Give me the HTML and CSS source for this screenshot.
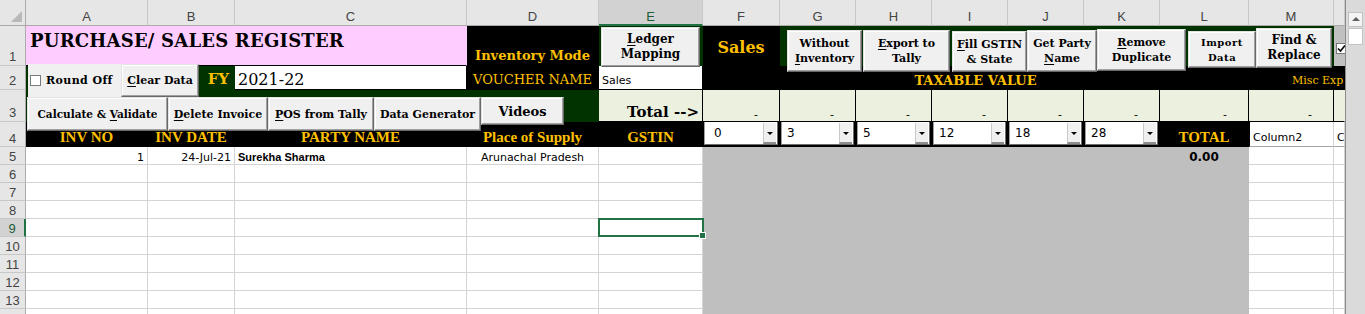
FILE: index.html
```html
<!DOCTYPE html>
<html lang="en">
<head>
    <meta charset="UTF-8">
    <title>Purchase / Sales Register</title>
    <link rel="stylesheet" href="styles.css">
</head>
<body>

<div class="app">
    <div class="wrap">
        <div class="sheet">
            <!-- column headers -->
            <div class="corner"><span class="tri"></span></div>
            <div class="ch">A</div>
            <div class="ch">B</div>
            <div class="ch">C</div>
            <div class="ch">D</div>
            <div class="ch on">E</div>
            <div class="ch">F</div>
            <div class="ch">G</div>
            <div class="ch">H</div>
            <div class="ch">I</div>
            <div class="ch">J</div>
            <div class="ch">K</div>
            <div class="ch">L</div>
            <div class="ch">M</div>
            <div class="ch"></div>

            <!-- row 1 -->
            <div class="rh tall">1</div>
            <div class="c pink title span3">PURCHASE/ SALES REGISTER</div>
            <div class="c blk mode">Inventory Mode</div>
            <div class="c dkg"></div>
            <div class="c blk sales">Sales</div>
            <div class="c dkg span7"></div>
            <div class="c grey"></div>

            <!-- row 2 -->
            <div class="rh tall">2</div>
            <div class="c dkg"></div>
            <div class="c dkg fy">FY</div>
            <div class="c boxed fyval">2021-22</div>
            <div class="c blk voucher">VOUCHER NAME</div>
            <div class="c boxed txt low">Sales</div>
            <div class="c blk span7 taxable">TAXABLE VALUE</div>
            <div class="c blk span2 misc">Misc Exp</div>

            <!-- row 3 -->
            <div class="rh tall">3</div>
            <div class="c dkg span4"></div>
            <div class="c lg total">Total --&gt;</div>
            <div class="c lg dash">-</div>
            <div class="c lg dash">-</div>
            <div class="c lg dash">-</div>
            <div class="c lg dash">-</div>
            <div class="c lg dash">-</div>
            <div class="c lg dash">-</div>
            <div class="c lg dash">-</div>
            <div class="c lg dash">-</div>
            <div class="c lg nb"></div>

            <!-- row 4 -->
            <div class="rh tall r4">4</div>
            <div class="c blk hdr">INV NO</div>
            <div class="c blk hdr">INV DATE</div>
            <div class="c blk hdr">PARTY NAME</div>
            <div class="c blk hdr">Place of Supply</div>
            <div class="c blk hdr">GSTIN</div>
            <div class="c blk"><div class="combo focus"><span>0</span><i class="drop"></i></div></div>
            <div class="c blk"><div class="combo"><span>3</span><i class="drop"></i></div></div>
            <div class="c blk"><div class="combo"><span>5</span><i class="drop"></i></div></div>
            <div class="c blk"><div class="combo"><span>12</span><i class="drop"></i></div></div>
            <div class="c blk"><div class="combo"><span>18</span><i class="drop"></i></div></div>
            <div class="c blk"><div class="combo"><span>28</span><i class="drop"></i></div></div>
            <div class="c blk hdr">TOTAL</div>
            <div class="c txt col first">Column2</div>
            <div class="c txt col">C</div>

            <!-- row 5 -->
            <div class="rh">5</div>
            <div class="c txt num">1</div>
            <div class="c txt num">24-Jul-21</div>
            <div class="c txt bold">Surekha Sharma</div>
            <div class="c txt mid">Arunachal Pradesh</div>
            <div class="c"></div>
            <div class="c gray span6"></div>
            <div class="c gray txt amount">0.00</div>
            <div class="c"></div>
            <div class="c"></div>

            <!-- rows 6 - 14 -->
            <div class="rh">6</div>
            <div class="c"></div><div class="c"></div><div class="c"></div><div class="c"></div><div class="c"></div>
            <div class="c gray span7"></div><div class="c"></div><div class="c"></div>

            <div class="rh">7</div>
            <div class="c"></div><div class="c"></div><div class="c"></div><div class="c"></div><div class="c"></div>
            <div class="c gray span7"></div><div class="c"></div><div class="c"></div>

            <div class="rh">8</div>
            <div class="c"></div><div class="c"></div><div class="c"></div><div class="c"></div><div class="c"></div>
            <div class="c gray span7"></div><div class="c"></div><div class="c"></div>

            <div class="rh on">9</div>
            <div class="c"></div><div class="c"></div><div class="c"></div><div class="c"></div><div class="c sel"></div>
            <div class="c gray span7"></div><div class="c"></div><div class="c"></div>

            <div class="rh">10</div>
            <div class="c"></div><div class="c"></div><div class="c"></div><div class="c"></div><div class="c"></div>
            <div class="c gray span7"></div><div class="c"></div><div class="c"></div>

            <div class="rh">11</div>
            <div class="c"></div><div class="c"></div><div class="c"></div><div class="c"></div><div class="c"></div>
            <div class="c gray span7"></div><div class="c"></div><div class="c"></div>

            <div class="rh">12</div>
            <div class="c"></div><div class="c"></div><div class="c"></div><div class="c"></div><div class="c"></div>
            <div class="c gray span7"></div><div class="c"></div><div class="c"></div>

            <div class="rh">13</div>
            <div class="c"></div><div class="c"></div><div class="c"></div><div class="c"></div><div class="c"></div>
            <div class="c gray span7"></div><div class="c"></div><div class="c"></div>

            <div class="rh"></div>
            <div class="c"></div><div class="c"></div><div class="c"></div><div class="c"></div><div class="c"></div>
            <div class="c gray span7"></div><div class="c"></div><div class="c"></div>
        </div>

        <!-- form controls floating over the sheet -->
        <div class="check-ctl round-off"><span class="box"></span>Round Off</div>
        <div class="btn clear"><span><u>C</u>lear Data</span></div>
        <div class="btn calc"><span>Calculate &amp; <u>V</u>alidate</span></div>
        <div class="btn del"><span><u>D</u>elete Invoice</span></div>
        <div class="btn pos"><span><u>P</u>OS from Tally</span></div>
        <div class="btn gen"><span>Data Generator</span></div>
        <div class="btn videos"><span>Videos</span></div>
        <div class="btn ledger"><span><u>L</u>edger<br>Mapping</span></div>
        <div class="btn noinv"><span>Without<br><u>I</u>nventory</span></div>
        <div class="btn export"><span><u>E</u>xport to<br>Tally</span></div>
        <div class="btn fill"><span><u>F</u>ill GSTIN<br>&amp; State</span></div>
        <div class="btn party"><span>Get Party<br><u>N</u>ame</span></div>
        <div class="btn dup"><span><u>R</u>emove<br>Duplicate</span></div>
        <div class="btn import"><span>Import<br>Data</span></div>
        <div class="btn find"><span>Find &amp;<br>Replace</span></div>
        <div class="mini-check">
            <svg width="9" height="9" viewBox="0 0 9 9"><path d="M1 4.5 L3.5 7 L8 1.5" fill="none" stroke="#000" stroke-width="1.6"/></svg>
        </div>
    </div>

    <div class="vscroll">
        <div class="sb-up"></div>
        <div class="sb-thumb"></div>
    </div>
</div>

</body>
</html>
```

FILE: styles.css
```css
body {
    margin: 0;
    background: #fff;
    overflow: hidden;
    font-family: "DejaVu Sans", sans-serif;
}
.app {
    display: flex;
    width: 1365px;
    height: 314px;
}
.wrap {
    position: relative;
    width: 1345px;
    height: 314px;
    overflow: hidden;
}
.sheet {
    display: grid;
    grid-template-columns: 26px 122px 87px 232px 132px 104px 77px 76px 76px 76px 76px 76px 89px 85px 11px;
    grid-template-rows: 26px 40px 24px 32px 25px repeat(10, 18px);
}

/* headers */
.corner {
    background: #e6e6e6;
    border-right: 1px solid #ababab;
    border-bottom: 1px solid #ababab;
    box-sizing: border-box;
    position: relative;
}
.tri {
    position: absolute;
    right: 3px;
    bottom: 3px;
    border-left: 11px solid transparent;
    border-bottom: 11px solid #b9b9b9;
}
.ch {
    background: #e6e6e6;
    border-right: 1px solid #c8c8c8;
    border-bottom: 1px solid #ababab;
    box-sizing: border-box;
    display: flex;
    align-items: center;
    justify-content: center;
    padding-top: 8px;
    font: 13px/15px "Liberation Sans", sans-serif;
    color: #444;
}
.ch.on {
    background: #d2d2d2;
    border-bottom: 2px solid #217346;
    color: #1e5c38;
}
.rh {
    background: #e6e6e6;
    border-right: 1px solid #ababab;
    border-bottom: 1px solid #c8c8c8;
    box-sizing: border-box;
    display: flex;
    align-items: center;
    justify-content: center;
    padding-top: 2px;
    font: 13px/15px "Liberation Sans", sans-serif;
    color: #444;
}
.rh.tall {
    align-items: flex-end;
    padding: 0 0 1px;
}
.rh.r4 { padding-bottom: 0; }
.rh.on {
    background: #d2d2d2;
    border-right: 2px solid #217346;
    color: #1e5c38;
}

/* cells */
.c {
    box-sizing: border-box;
    border-right: 1px solid #d4d4d4;
    border-bottom: 1px solid #d4d4d4;
    display: flex;
    align-items: flex-end;
    overflow: hidden;
    white-space: nowrap;
    min-width: 0;
}
.span2 { grid-column: span 2; }
.span3 { grid-column: span 3; }
.span4 { grid-column: span 4; }
.span6 { grid-column: span 6; }
.span7 { grid-column: span 7; }

.pink { background: #ffccff; border-color: #ffccff; border-bottom-color: #000; }
.blk { background: #000; border-color: #000; }
.dkg { background: #003300; border-color: #003300; }
.grey { background: #c0c0c0; border-color: #c0c0c0; }
.gray { background: #bfbfbf; border-color: #bfbfbf; }
.lg { background: #ebf1de; border-color: #000; }
.lg.nb { border-right-color: #ebf1de; }
.boxed { border-color: #000; }

.title {
    align-items: flex-start;
    padding: 4px 0 0 4px;
    font: bold 18px "DejaVu Serif", serif;
    letter-spacing: 0.2px;
}
.mode {
    justify-content: center;
    padding-bottom: 2px;
    color: #ffc000;
    font: bold 13px "DejaVu Serif", serif;
}
.sales {
    justify-content: center;
    align-items: center;
    padding-top: 4px;
    color: #ffc000;
    font: bold 16px "DejaVu Serif", serif;
}
.fy {
    justify-content: flex-end;
    align-items: center;
    padding: 2px 5px 0 0;
    color: #ffc000;
    font: bold 15px "DejaVu Serif", serif;
}
.fyval {
    align-items: center;
    padding: 3px 0 0 3px;
    font: 16px "DejaVu Serif", serif;
}
.voucher {
    justify-content: center;
    align-items: center;
    padding-top: 4px;
    color: #ffc000;
    font: 13px "DejaVu Serif", serif;
}
.taxable {
    justify-content: center;
    align-items: center;
    padding-top: 5px;
    color: #ffc000;
    font: bold 13px "DejaVu Serif", serif;
}
.misc {
    align-items: center;
    padding: 5px 0 0 43px;
    color: #ffc000;
    font: 11px "DejaVu Serif", serif;
    border-right: 0;
}
.total {
    justify-content: flex-end;
    padding: 0 3px 0 0;
    font: bold 15px "DejaVu Serif", serif;
}
.dash {
    justify-content: flex-end;
    padding: 0 21px 1px 0;
    font: 11px/11px "DejaVu Sans", sans-serif;
}
.hdr {
    justify-content: center;
    align-items: center;
    padding-top: 7px;
    color: #ffc000;
    font: bold 15px "Liberation Serif", serif;
}

.txt {
    align-items: center;
    padding: 3px 3px 0;
    font-size: 11px;
    color: #000;
}
.txt.low {
    align-items: flex-end;
    padding: 0 3px 2px;
}
.num { justify-content: flex-end; }
.mid { justify-content: center; }
.bold {
    font: bold 11px "Liberation Sans", sans-serif;
}
.amount {
    justify-content: center;
    font: bold 12px "DejaVu Sans", sans-serif;
}
.col {
    border-bottom-color: #a6a6a6;
    padding-top: 7px;
}
.col.first { border-left: 1px solid #000; }

/* dropdown cells in row 4 */
.combo {
    flex: 1;
    height: 24px;
    margin: 0 1px 1px 1px;
    background: #fff;
    border: 1px solid #a0a0a0;
    border-right-color: #6d6d6d;
    border-bottom-color: #6d6d6d;
    box-sizing: border-box;
    display: flex;
    align-items: center;
    font: 12px "DejaVu Sans", sans-serif;
}
.combo span {
    flex: 1;
    padding-left: 5px;
}
.combo.focus span {
    padding-left: 9px;
}
.drop {
    width: 13px;
    height: 21px;
    margin-right: 1px;
    background: #f0f0f0;
    border-left: 1px solid #c8c8c8;
    border-bottom: 2px solid #8d8d8d;
    box-sizing: border-box;
    position: relative;
}
.drop::after {
    content: "";
    position: absolute;
    left: 3px;
    top: 9px;
    border-left: 3px solid transparent;
    border-right: 3px solid transparent;
    border-top: 3px solid #000;
}

/* selected cell */
.sel { position: relative; overflow: visible; }
.sel::before {
    content: "";
    position: absolute;
    left: -1px;
    top: -1px;
    right: -2px;
    bottom: -1px;
    border: 2px solid #217346;
}
.sel::after {
    content: "";
    position: absolute;
    right: -4px;
    bottom: -3px;
    width: 5px;
    height: 5px;
    background: #217346;
    border: 1px solid #fff;
}

/* floating form controls */
.btn {
    position: absolute;
    box-sizing: border-box;
    background: #f0f0f0;
    border: 1px solid;
    border-color: #e3e3e3 #696969 #696969 #e3e3e3;
    box-shadow: inset -1px -1px #a0a0a0, inset 1px 1px #fff;
    display: flex;
    align-items: center;
    justify-content: center;
    text-align: center;
    font: bold 11px/15px "DejaVu Serif", serif;
    color: #000;
    white-space: nowrap;
}
.btn u { text-underline-offset: 2px; }

.check-ctl {
    position: absolute;
    left: 28px;
    top: 64px;
    width: 93px;
    height: 33px;
    background: #f0f0f0;
    display: flex;
    align-items: center;
    font: bold 11px "DejaVu Serif", serif;
    letter-spacing: 0.4px;
}
.check-ctl .box {
    width: 9px;
    height: 9px;
    margin: 0 5px 0 2px;
    background: #fff;
    border: 1px solid #7a7a7a;
}

.clear  { left: 121px; top: 64px; width: 78px; height: 33px; }
.calc   { left: 27px;  top: 97px; width: 141px; height: 34px; font-size: 10.5px; }
.del    { left: 168px; top: 97px; width: 100px; height: 34px; }
.pos    { left: 268px; top: 97px; width: 106px; height: 34px; }
.gen    { left: 374px; top: 97px; width: 107px; height: 34px; }
.videos { left: 481px; top: 97px; width: 83px;  height: 28px; font-size: 13px; }
.ledger { left: 601px; top: 27px; width: 99px;  height: 40px; font-size: 12px; }
.noinv  { left: 787px; top: 30px; width: 75px;  height: 42px; }
.export { left: 863px; top: 30px; width: 87px;  height: 42px; }
.fill   { left: 952px; top: 31px; width: 75px;  height: 41px; }
.party  { left: 1027px; top: 30px; width: 70px; height: 42px; }
.dup    { left: 1097px; top: 29px; width: 89px; height: 42px; }
.import { left: 1188px; top: 31px; width: 68px; height: 37px; letter-spacing: 0.5px; font-size: 10px; }
.find   { left: 1256px; top: 28px; width: 76px; height: 40px; font-size: 12px; }

.mini-check {
    position: absolute;
    left: 1336px;
    top: 43px;
    width: 9px;
    height: 9px;
    background: #fff;
    border: 1px solid #7a7a7a;
}
.mini-check svg { display: block; }

/* vertical scroll bar */
.vscroll {
    width: 20px;
    height: 314px;
    box-sizing: border-box;
    background: #dadada;
    border-left: 1px solid #8a8a8a;
    display: flex;
    flex-direction: column;
    align-items: center;
    padding-top: 12px;
}
.sb-up {
    width: 15px;
    height: 15px;
    box-sizing: border-box;
    background: #f4f4f4;
    border: 1px solid #c2c2c2;
    position: relative;
}
.sb-up::after {
    content: "";
    position: absolute;
    left: 3px;
    top: 4px;
    border-left: 4px solid transparent;
    border-right: 4px solid transparent;
    border-bottom: 4px solid #606060;
}
.sb-thumb {
    width: 15px;
    height: 17px;
    margin-top: 1px;
    box-sizing: border-box;
    background: #fff;
    border: 1px solid #c2c2c2;
}
```
